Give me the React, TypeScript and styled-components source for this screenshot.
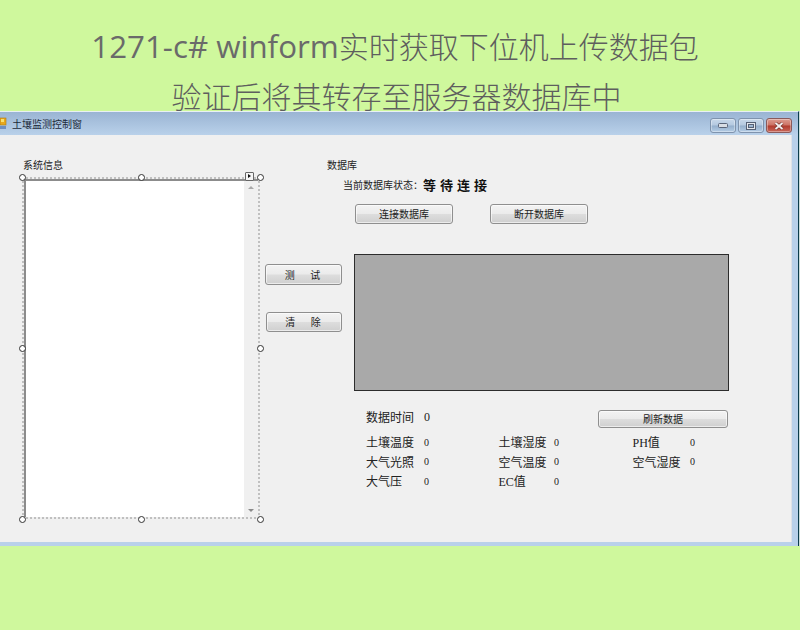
import React from 'react'
import styled, { createGlobalStyle } from 'styled-components'

const GlobalStyle = createGlobalStyle`
  html, body {
    margin: 0;
    padding: 0;
    background: #cff89d;
  }
`

const Page = styled.div`
  width: 800px;
  height: 630px;
  overflow: hidden;
  background: #cff89d;
  display: flex;
  flex-direction: column;
`

const Banner = styled.header`
  height: 111px;
  padding-top: 21px;
  box-sizing: border-box;
  text-align: center;
  color: #5e5e5e;
  font-family: 'Open Sans', 'Noto Sans CJK SC', sans-serif;
  font-size: 30px;
  font-weight: 300;
  line-height: 50px;
`

const BannerLine = styled.div<{ $shift: number }>`
  white-space: nowrap;
  padding-right: ${props => props.$shift}px;
`

const BannerLatin = styled.span`
  font-size: 31.3px;
  font-weight: 400;
  color: #6a6a6a;
`

const Window = styled.div`
  height: 435px;
  border-top: 1px solid #e8f0f4;
  border-right: 1px solid #0c3d4c;
  box-shadow: 1px 0 0 #cbdcd8;
  margin-right: 1px;
  box-sizing: border-box;
  background: #b9d1ea;
  display: flex;
  flex-direction: column;
  font-family: 'Noto Sans CJK SC', sans-serif;
  font-size: 10px;
  color: #222;
`

const TitleBar = styled.div`
  height: 23px;
  flex: none;
  display: flex;
  align-items: center;
  padding: 0 6px 0 0;
  background: linear-gradient(#9ab4d3, #b9d1ea);
`

const TitleIcon = styled.svg`
  width: 8px;
  height: 13px;
  margin-right: 4px;
  flex: none;
`

const TitleText = styled.span`
  flex: 1;
  color: #1c2a3a;
`

const Controls = styled.div`
  display: flex;
  gap: 1px;
  align-self: flex-start;
  margin-top: 6px;
`

const ControlButton = styled.div<{ $close?: boolean }>`
  width: 26px;
  height: 15px;
  box-sizing: border-box;
  display: flex;
  align-items: center;
  justify-content: center;
  border: 1px solid ${props => (props.$close ? '#8a5a5a' : '#7f93ad')};
  border-radius: 3px;
  background: ${props =>
    props.$close
      ? 'linear-gradient(#dc9c90, #cc7264 48%, #b13a2c 52%, #c8675a)'
      : 'linear-gradient(#c8d8ea, #b4c9e0 48%, #94aecb 52%, #b4cde6)'};
  box-shadow: inset 0 0 0 1px rgba(255, 255, 255, 0.35);
  & + & {
    margin-left: ${props => (props.$close ? '1px' : '0')};
  }
`

const ClientArea = styled.div`
  flex: none;
  height: 407px;
  width: 792px;
  box-sizing: border-box;
  background: #f0f0f0;
  border-right: 1px solid #dfe3e7;
  padding: 24px 0 0 22px;
  display: grid;
  grid-template-columns: 238px 94px 375px;
  grid-template-rows: 45px 1fr;
`

const ListColumn = styled.section`
  grid-row: 1 / 3;
`

const GroupLabel = styled.div`
  height: 12px;
  line-height: 12px;
  padding-left: 1px;
`

const SelectionFrame = styled.div`
  position: relative;
  margin-top: 6px;
  height: 342px;
  box-sizing: border-box;
  border: 2px dotted #c0c0c0;
`

const ListBox = styled.div`
  height: 100%;
  box-sizing: border-box;
  border-top: 2px solid #8c8c8c;
  border-left: 2px solid #8c8c8c;
  background: #fff;
  display: flex;
  justify-content: flex-end;
`

const ScrollBar = styled.div`
  width: 14px;
  background: #f0f0f0;
  display: flex;
  flex-direction: column;
  justify-content: space-between;
  align-items: center;
  padding: 5px 0;
  box-sizing: border-box;
`

const ScrollArrow = styled.div<{ $down?: boolean }>`
  width: 0;
  height: 0;
  border-left: 3px solid transparent;
  border-right: 3px solid transparent;
  ${props =>
    props.$down ? 'border-top: 3px solid #8a8a8a;' : 'border-bottom: 3px solid #a8a8a8;'}
`

const Handle = styled.span<{ $x: string; $y: string }>`
  position: absolute;
  left: ${props => props.$x};
  top: ${props => props.$y};
  width: 7px;
  height: 7px;
  box-sizing: border-box;
  margin: -5px 0 0 -5px;
  border: 1.5px solid #333;
  border-radius: 50%;
  background: #fff;
`

const SmartTag = styled.span`
  position: absolute;
  left: 221px;
  top: -7px;
  width: 9px;
  height: 9px;
  box-sizing: border-box;
  border: 1px solid #666;
  border-radius: 1px;
  background: #f4f4f4;
  &::after {
    content: '';
    position: absolute;
    left: 2px;
    top: 1px;
    border-left: 3px solid #111;
    border-top: 2.5px solid transparent;
    border-bottom: 2.5px solid transparent;
  }
`

const DatabaseHeader = styled.section`
  grid-column: 2 / 4;
  padding-left: 66px;
`

const StatusLine = styled.div`
  margin-top: 8px;
  padding-left: 17px;
  height: 12px;
  line-height: 12px;
  display: flex;
  align-items: center;
`

const StatusValue = styled.span`
  font-size: 13px;
  font-weight: 700;
  letter-spacing: 4px;
  color: #111;
`

const ActionColumn = styled.div`
  padding: 60px 0 0 5px;
  display: flex;
  flex-direction: column;
  gap: 27px;
`

const FormButton = styled.button<{ $width: number; $height: number; $inset?: number; $textShift?: number }>`
  width: ${props => props.$width}px;
  height: ${props => props.$height}px;
  margin: 0 ${props => props.$inset || 0}px 0 0;
  padding: 0 ${props => props.$textShift || 0}px 0 0;
  flex: none;
  box-sizing: border-box;
  border: 1px solid #8f8f8f;
  border-radius: 3px;
  background: linear-gradient(#f3f3f3, #ebebeb 48%, #dddddd 52%, #cfcfcf);
  box-shadow: inset 0 0 0 1px rgba(255, 255, 255, 0.6);
  font-family: 'Noto Sans CJK SC', sans-serif;
  font-size: 10px;
  line-height: 1;
  color: #222;
  white-space: pre;
`

const ClearButton = styled(FormButton)`
  align-self: flex-end;
  margin-right: 12px;
`

const DataColumn = styled.div`
  display: flex;
  flex-direction: column;
`

const ConnectRow = styled.div`
  display: flex;
  gap: 37px;
  padding-left: 1px;
`

const ChartPanel = styled.div`
  height: 137px;
  margin-top: 30px;
  box-sizing: border-box;
  border: 1px solid #2c2c2c;
  background: #a9a9a9;
`

const TimeRow = styled.div`
  display: flex;
  align-items: center;
  margin-top: 19px;
  height: 18px;
  padding-left: 12px;
`

const ReadingLabel = styled.span`
  font-family: 'Liberation Serif', 'Noto Sans CJK SC', serif;
  font-size: 12px;
  white-space: nowrap;
`

const ReadingValue = styled.span`
  font-family: 'Liberation Serif', 'Noto Sans CJK SC', serif;
  font-size: 10px;
`

const TimeLabel = styled(ReadingLabel)`
  margin-bottom: 4px;
`

const TimeValue = styled(ReadingValue)`
  margin: 0 0 4px 10px;
  flex: 1;
  font-size: 12px;
`

const ReadingGrid = styled.div`
  display: grid;
  grid-template-columns: 58px 74.5px 55.5px 78.5px 57.5px 30px;
  grid-auto-rows: 19.5px;
  align-items: center;
  margin-top: 4.5px;
  padding-left: 12px;
`

const readings = [
  ['土壤温度', '土壤湿度', 'PH值'],
  ['大气光照', '空气温度', '空气湿度'],
  ['大气压', 'EC值', ''],
]

const handles: [string, string][] = [
  ['0', '0'],
  ['119px', '0'],
  ['238px', '0'],
  ['0', '171px'],
  ['238px', '171px'],
  ['0', '342px'],
  ['119px', '342px'],
  ['238px', '342px'],
]

const App = () => (
  <Page>
    <GlobalStyle />
    <Banner>
      <BannerLine $shift={10}>
        <BannerLatin>1271-c# winform</BannerLatin>实时获取下位机上传数据包
      </BannerLine>
      <BannerLine $shift={7}>验证后将其转存至服务器数据库中</BannerLine>
    </Banner>
    <Window>
      <TitleBar>
        <TitleIcon viewBox="0 0 8 13">
          <rect x="0" y="1" width="6" height="7" fill="#e8a81c" stroke="#b07a10" strokeWidth="0.6" />
          <rect x="1" y="2" width="3" height="3" fill="#f8e070" />
          <rect x="0" y="9" width="6" height="3" fill="#6f8fc0" />
        </TitleIcon>
        <TitleText>土壤监测控制窗</TitleText>
        <Controls>
          <ControlButton>
            <svg width="10" height="5" viewBox="0 0 10 5">
              <rect x="0.5" y="0.5" width="9" height="4" rx="1" fill="#d8dde4" stroke="#5a6578" />
            </svg>
          </ControlButton>
          <ControlButton>
            <svg width="10" height="8" viewBox="0 0 10 8">
              <rect x="1" y="1" width="8" height="6" fill="none" stroke="#e4e8ee" strokeWidth="2" />
              <rect x="0.5" y="0.5" width="9" height="7" fill="none" stroke="#566176" />
              <rect x="2.5" y="2.5" width="5" height="3" fill="none" stroke="#566176" />
            </svg>
          </ControlButton>
          <ControlButton $close>
            <svg width="10" height="8" viewBox="0 0 10 8">
              <path d="M1.5 1 L8.5 7 M8.5 1 L1.5 7" stroke="#6b2a22" strokeWidth="3.2" />
              <path d="M1.5 1 L8.5 7 M8.5 1 L1.5 7" stroke="#f4eeee" strokeWidth="2" />
            </svg>
          </ControlButton>
        </Controls>
      </TitleBar>
      <ClientArea>
        <ListColumn>
          <GroupLabel>系统信息</GroupLabel>
          <SelectionFrame>
            <ListBox>
              <ScrollBar>
                <ScrollArrow />
                <ScrollArrow $down />
              </ScrollBar>
            </ListBox>
            <SmartTag />
            {handles.map(([x, y]) => (
              <Handle key={`${x}-${y}`} $x={x} $y={y} />
            ))}
          </SelectionFrame>
        </ListColumn>
        <DatabaseHeader>
          <GroupLabel>数据库</GroupLabel>
          <StatusLine>
            当前数据库状态：<StatusValue>等待连接</StatusValue>
          </StatusLine>
        </DatabaseHeader>
        <ActionColumn>
          <FormButton $width={77} $height={21} $textShift={2}>{'测       试'}</FormButton>
          <ClearButton $width={76} $height={20} $textShift={2}>{'清       除'}</ClearButton>
        </ActionColumn>
        <DataColumn>
          <ConnectRow>
            <FormButton $width={98} $height={20}>连接数据库</FormButton>
            <FormButton $width={98} $height={20}>断开数据库</FormButton>
          </ConnectRow>
          <ChartPanel />
          <TimeRow>
            <TimeLabel>数据时间</TimeLabel>
            <TimeValue>0</TimeValue>
            <FormButton $width={130} $height={18} $inset={1}>刷新数据</FormButton>
          </TimeRow>
          <ReadingGrid>
            {readings.map(row =>
              row.map((label, i) => (
                <React.Fragment key={label || i}>
                  <ReadingLabel>{label}</ReadingLabel>
                  <ReadingValue>{label ? '0' : ''}</ReadingValue>
                </React.Fragment>
              )),
            )}
          </ReadingGrid>
        </DataColumn>
      </ClientArea>
    </Window>
  </Page>
)

export default App
